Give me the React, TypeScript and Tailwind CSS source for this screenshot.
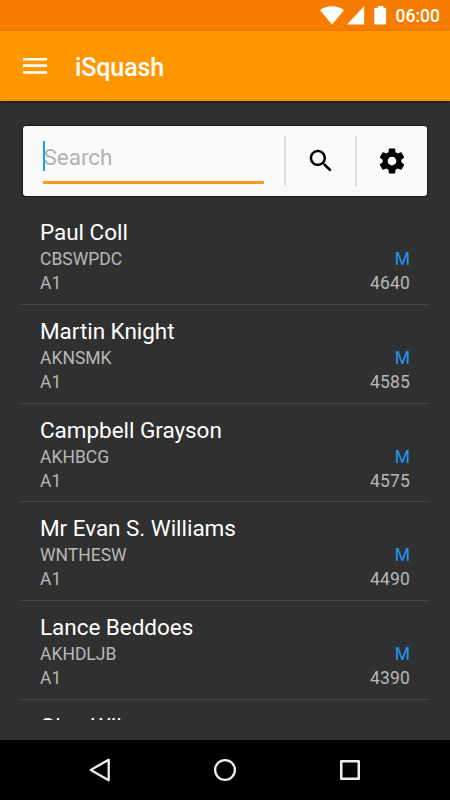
const players = [
  { name: 'Paul Coll', code: 'CBSWPDC', grade: 'A1', sex: 'M', points: 4640 },
  { name: 'Martin Knight', code: 'AKNSMK', grade: 'A1', sex: 'M', points: 4585 },
  { name: 'Campbell Grayson', code: 'AKHBCG', grade: 'A1', sex: 'M', points: 4575 },
  { name: 'Mr Evan S. Williams', code: 'WNTHESW', grade: 'A1', sex: 'M', points: 4490 },
  { name: 'Lance Beddoes', code: 'AKHDLJB', grade: 'A1', sex: 'M', points: 4390 },
];

function StatusBar() {
  return (
    <div className="flex h-[31px] shrink-0 items-start justify-end bg-[#f57c00] pr-[10px] text-white">
      <svg className="mt-[6px] h-[19px] w-[67px]" viewBox="0 0 67 19" fill="currentColor">
        <path d="M0 4.300C3.300 1.700 7.300 0.200 12 0.200s8.700 1.500 12 4.100L12 18.400z" />
        <path d="M27 18.500L44.200 0v18.500z" />
        <path d="M58 0h5.400v1.800h1.600q1.100 0 1.100 1.100v14.400q0 1.100-1.100 1.100h-9.700q-1.100 0-1.100-1.100V2.900q0-1.100 1.100-1.100H58z" />
      </svg>
      <span className="ml-[9px] mt-[6px] text-[17.5px] font-medium leading-[21px]">06:00</span>
    </div>
  );
}

function Toolbar() {
  return (
    <header className="flex h-[70px] shrink-0 items-center bg-[#ff9800] pl-[23px] text-white shadow-[0_1px_2px_rgba(0,0,0,0.6)]">
      <svg className="h-[16px] w-[24px]" viewBox="0 0 24 16" fill="currentColor">
        <path d="M0 0h24v2.600H0zM0 6.300h24v2.600H0zM0 13.200h24V15.800H0z" />
      </svg>
      <h1 className="ml-[28px] mt-[3px] text-[25px] font-medium leading-[30px] tracking-[-0.1px]">iSquash</h1>
    </header>
  );
}

function SearchCard() {
  return (
    <div className="mx-[23px] mt-[25px] flex h-[70px] shrink-0 items-start rounded-[3px] bg-[#fafafa] pl-[20px] shadow-[0_0_1px_1px_rgba(0,0,0,0.5)]">
      <div className="mr-[20px] mt-[15px] flex h-[43px] w-[221px] items-start border-b-[3px] border-[#ff9a1c]">
        <div className="h-[30px] w-[2px] bg-[#10a5fa]" />
        <span className="-ml-[1.5px] mt-[3px] text-[22.5px] leading-[26px] tracking-[-0.05px] text-[#b2b2b2]">Search</span>
      </div>
      <div className="mt-[10px] h-[50px] w-[1.5px] bg-[#dcdcdc]" />
      <div className="flex h-[70px] w-[69.5px] items-center justify-center pl-[1px]">
        <svg className="size-[30px]" viewBox="0 0 24 24" fill="#000">
          <path d="M15.500 14h-.79l-.28-.27C15.410 12.590 16 11.110 16 9.500 16 5.910 13.090 3 9.500 3S3 5.910 3 9.500 5.910 16 9.500 16c1.610 0 3.090-.59 4.230-1.570l.27.28v.79l5 4.990L20.490 19l-4.990-5zm-6 0C7.010 14 5 11.990 5 9.500S7.010 5 9.500 5 14 7.010 14 9.500 11.990 14 9.500 14z" />
        </svg>
      </div>
      <div className="mt-[10px] h-[50px] w-[1.5px] bg-[#dcdcdc]" />
      <div className="flex h-[70px] flex-1 items-center justify-center">
        <svg className="size-[30px]" viewBox="0 0 24 24" fill="#000">
          <path d="M19.430 12.980c.04-.32.07-.64.07-.98s-.03-.66-.07-.98l2.110-1.650c.19-.15.24-.42.12-.64l-2-3.460c-.12-.22-.39-.3-.61-.22l-2.490 1c-.52-.4-1.080-.73-1.690-.98l-.38-2.650C14.460 2.180 14.250 2 14 2h-4c-.25 0-.46.18-.49.42l-.38 2.650c-.61.25-1.170.59-1.690.98l-2.490-1c-.23-.09-.49 0-.61.22l-2 3.460c-.13.22-.07.49.12.64l2.110 1.650c-.04.32-.07.65-.07.98s.03.66.07.98l-2.110 1.650c-.19.15-.24.42-.12.64l2 3.460c.12.22.39.3.61.22l2.490-1c.52.4 1.080.73 1.690.98l.38 2.650c.03.24.24.42.49.42h4c.25 0 .46-.18.49-.42l.38-2.650c.61-.25 1.170-.59 1.690-.98l2.490 1c.23.09.49 0 .61-.22l2-3.460c.12-.22.07-.49-.12-.64l-2.110-1.650zM12 15.500c-1.930 0-3.500-1.570-3.500-3.500s1.570-3.500 3.500-3.500 3.500 1.570 3.500 3.500-1.570 3.500-3.500 3.500z" />
        </svg>
      </div>
    </div>
  );
}

function NavBar() {
  return (
    <nav className="flex h-[60px] shrink-0 items-center justify-between bg-black px-[85px]">
      <svg className="size-[30px]" viewBox="0 0 30 30" fill="none" stroke="#eee" strokeWidth="2.300" strokeLinejoin="round">
        <path d="M23.700 4.700v20.600L5.700 15z" />
      </svg>
      <svg className="size-[30px]" viewBox="0 0 30 30" fill="none" stroke="#eee" strokeWidth="2.300">
        <circle cx="15" cy="15" r="9.900" />
      </svg>
      <svg className="size-[30px]" viewBox="0 0 30 30" fill="none" stroke="#eee" strokeWidth="2.500" strokeLinejoin="round">
        <rect x="6.250" y="6.250" width="17.500" height="17.500" />
      </svg>
    </nav>
  );
}

export default function App() {
  return (
    <div className="flex h-[800px] w-[450px] flex-col overflow-hidden bg-[#303030] font-['Roboto',sans-serif]">
      <StatusBar />
      <Toolbar />
      <SearchCard />
      <ul className="mx-[20px] mb-[20px] mt-[10px] min-h-0 flex-1 overflow-hidden">
        {players.map((p) => (
          <li key={p.name} className="h-[98.75px] border-b border-[#454545] px-[20px] pt-[13px]">
            <div className="mb-[2px] text-[22.5px] leading-[26px] tracking-[-0.04px] text-white">{p.name}</div>
            <div className="flex justify-between text-[17.5px] leading-[24px] text-[#b8b8b8]">
              <span>{p.code}</span>
              <span className="text-[#2196f3]">{p.sex}</span>
            </div>
            <div className="flex justify-between text-[17.5px] leading-[24px] text-[#b8b8b8]">
              <span>{p.grade}</span>
              <span className="tracking-[0.15px]">{p.points}</span>
            </div>
          </li>
        ))}
        <li className="px-[20px] pt-[13px] text-[22.5px] leading-[26px] text-white">Glen Wilson</li>
      </ul>
      <NavBar />
    </div>
  );
}
